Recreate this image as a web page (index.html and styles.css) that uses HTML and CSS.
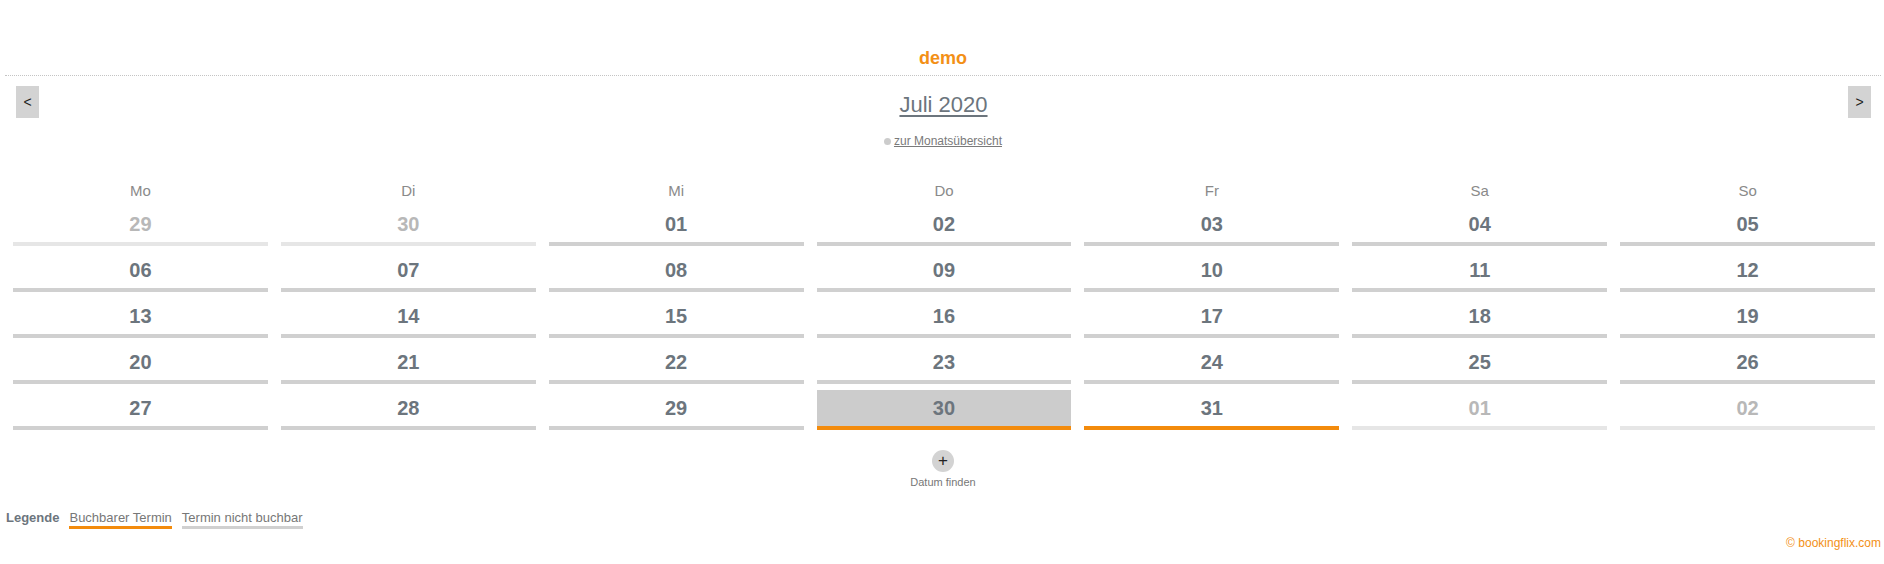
FILE: index.html
```html
<!DOCTYPE html>
<html lang="de">
<head>
<meta charset="utf-8">
<title>demo</title>
<link rel="stylesheet" href="styles.css">
</head>
<body>
<div class="page">
  <div class="title">demo</div>
  <div class="nav">
    <button class="navbtn prev">&lt;</button>
    <div class="month"><a href="#">Juli 2020</a></div>
    <button class="navbtn next">&gt;</button>
  </div>
  <div class="overview"><span class="dot"></span><a href="#">zur Monatsübersicht</a></div>

  <div class="cal">
    <div class="dow">Mo</div><div class="dow">Di</div><div class="dow">Mi</div><div class="dow">Do</div><div class="dow">Fr</div><div class="dow">Sa</div><div class="dow">So</div>

    <div class="day other">29</div><div class="day other">30</div><div class="day">01</div><div class="day">02</div><div class="day">03</div><div class="day">04</div><div class="day">05</div>
    <div class="day">06</div><div class="day">07</div><div class="day">08</div><div class="day">09</div><div class="day">10</div><div class="day">11</div><div class="day">12</div>
    <div class="day">13</div><div class="day">14</div><div class="day">15</div><div class="day">16</div><div class="day">17</div><div class="day">18</div><div class="day">19</div>
    <div class="day">20</div><div class="day">21</div><div class="day">22</div><div class="day">23</div><div class="day">24</div><div class="day">25</div><div class="day">26</div>
    <div class="day">27</div><div class="day">28</div><div class="day">29</div><div class="day today bookable">30</div><div class="day bookable">31</div><div class="day other">01</div><div class="day other">02</div>
  </div>

  <div class="find">
    <span class="plus">+</span>
    <span class="findlabel">Datum finden</span>
  </div>

  <div class="legend">
    <span class="legend-title">Legende</span>
    <span class="legend-item ok">Buchbarer Termin</span>
    <span class="legend-item no">Termin nicht buchbar</span>
  </div>

  <div class="footer">© bookingflix.com</div>
</div>
</body>
</html>
```

FILE: styles.css
```css
html, body {
  margin: 0;
  padding: 0;
  background: #ffffff;
}

.page {
  padding: 0 3px 0 5px;
  font-family: "Liberation Sans", Arial, sans-serif;
  color: #6c757d;
}

.title {
  padding-top: 47px;
  padding-bottom: 6px;
  line-height: 22px;
  font-size: 18px;
  font-weight: bold;
  color: #f39016;
  text-align: center;
  border-bottom: 1px dotted #c4c4c4;
}

.nav {
  display: grid;
  grid-template-columns: auto 1fr auto;
  align-items: start;
}

.navbtn {
  margin-top: 10px;
  width: 23px;
  height: 32px;
  padding: 0;
  border: none;
  background: #d3d3d3;
  color: #222;
  font-family: "Liberation Sans", Arial, sans-serif;
  font-size: 14px;
  line-height: 32px;
}

.navbtn.prev { margin-left: 11px; }
.navbtn.next { margin-right: 10px; }

.month {
  margin-top: 16px;
  text-align: center;
  font-size: 22px;
  line-height: 26px;
}

.month a {
  color: #6c757d;
  text-decoration: underline;
  text-underline-offset: 3px;
}

.overview {
  margin-top: 15px;
  display: flex;
  justify-content: center;
  align-items: center;
  gap: 3px;
  font-size: 12px;
  line-height: 16px;
}

.overview a {
  color: #7a7a7a;
  text-decoration: underline;
}

.dot {
  width: 7px;
  height: 7px;
  border-radius: 50%;
  background: #cccccc;
}

.cal {
  margin: 33px 6px 0 8px;
  display: grid;
  grid-template-columns: repeat(7, 1fr);
  column-gap: 13px;
  row-gap: 6px;
}

.dow {
  text-align: center;
  font-size: 15px;
  line-height: 18px;
  color: #8a8a8a;
}

.day {
  height: 36px;
  line-height: 36px;
  text-align: center;
  font-size: 20px;
  font-weight: bold;
  color: #6c757d;
  border-bottom: 4px solid #d0d0d0;
}

.day.other {
  color: #b8b8b8;
  border-bottom-color: #e6e6e6;
}

.day.today {
  background: #cccccc;
}

.day.bookable {
  border-bottom-color: #f38b0c;
}

.find {
  margin-top: 20px;
  display: flex;
  flex-direction: column;
  align-items: center;
}

.plus {
  width: 22px;
  height: 22px;
  border-radius: 50%;
  background: #d3d3d3;
  color: #222;
  font-size: 17px;
  line-height: 22px;
  text-align: center;
}

.findlabel {
  margin-top: 3px;
  font-size: 11px;
  line-height: 14px;
  color: #777;
}

.legend {
  margin-top: 21px;
  display: flex;
  align-items: flex-start;
  gap: 10px;
  font-size: 13px;
  line-height: 16px;
  padding-left: 1px;
}

.legend-title {
  font-weight: bold;
  color: #6c757d;
}

.legend-item {
  color: #777;
  border-bottom: 3px solid #d0d0d0;
}

.legend-item.ok {
  border-bottom-color: #f38b0c;
}

.footer {
  margin-top: 7px;
  text-align: right;
  font-size: 12px;
  line-height: 14px;
  color: #f39016;
}
```
